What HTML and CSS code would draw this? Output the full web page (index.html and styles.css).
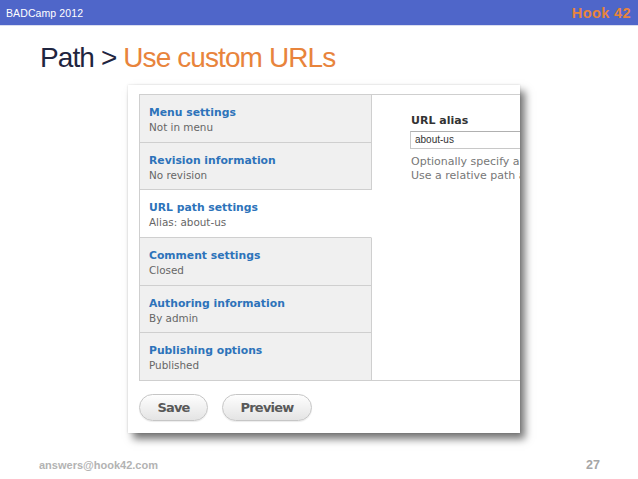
FILE: index.html
```html
<!DOCTYPE html>
<html>
<head>
<meta charset="utf-8">
<link rel="stylesheet" href="styles.css">
</head>
<body>
<div class="slide">
  <header class="topbar">
    <span class="event">BADCamp 2012</span>
    <span class="brand">Hook 42</span>
  </header>
  <h1 class="title"><span class="crumb">Path &gt; </span><span class="accent">Use custom URLs</span></h1>
  <div class="shot">
    <div class="vtabs">
      <ul class="tablist">
        <li class="tab"><strong>Menu settings</strong><span>Not in menu</span></li>
        <li class="tab"><strong>Revision information</strong><span>No revision</span></li>
        <li class="tab active"><strong>URL path settings</strong><span>Alias: about-us</span></li>
        <li class="tab"><strong>Comment settings</strong><span>Closed</span></li>
        <li class="tab"><strong>Authoring information</strong><span>By admin</span></li>
        <li class="tab"><strong>Publishing options</strong><span>Published</span></li>
      </ul>
      <div class="pane">
        <label class="label">URL alias</label>
        <div class="input">about-us</div>
        <p class="help">Optionally specify an alternative URL by which this content can be accessed.<br>Use a relative path and don't add a trailing slash or the URL alias won't work.</p>
      </div>
    </div>
    <div class="actions">
      <button class="btn save">Save</button>
      <button class="btn preview">Preview</button>
    </div>
  </div>
  <footer class="footer">
    <span class="mail">answers@hook42.com</span>
    <span class="page">27</span>
  </footer>
</div>
</body>
</html>
```
FILE: styles.css
```css
* { box-sizing: border-box; }
html, body { margin: 0; padding: 0; background: #fff; }
body { width: 638px; height: 479px; overflow: hidden; font-family: "Liberation Sans", Arial, sans-serif; }

.topbar {
  height: 26px;
  background: #4f66c9;
  border-bottom: 1px solid #d9ddf0;
  display: flex;
  justify-content: space-between;
  align-items: center;
  padding: 0 7px 0 6px;
}
.event { color: #fff; font-size: 10.5px; letter-spacing: 0.1px; }
.brand { color: #e8843c; font-size: 14.5px; font-weight: bold; letter-spacing: 0.4px; }

.title {
  margin: 15px 0 0 40px;
  font-size: 28px;
  line-height: 34px;
  font-weight: normal;
  letter-spacing: -0.9px;
}
.crumb { color: #1f2540; }
.accent { color: #e8843c; }

.shot {
  margin: 10px 0 0 128px;
  width: 392px;
  height: 348px;
  background: #fff;
  padding: 9px 0 0 11px;
  overflow: hidden;
  box-shadow: 5px 6px 8px rgba(0,0,0,0.55), 0 0 2px rgba(0,0,0,0.15);
  font-family: "DejaVu Sans", Verdana, sans-serif;
}

.vtabs {
  display: flex;
  width: 520px;
  height: 287px;
  border-top: 1px solid #cfcfcf;
  border-bottom: 1px solid #cfcfcf;
}
.tablist {
  list-style: none;
  margin: 0;
  padding: 0;
  flex: 0 0 233px;
  width: 233px;
  border-left: 1px solid #cfcfcf;
  display: flex;
  flex-direction: column;
}
.tab {
  flex: 1;
  background: #f0f0f0;
  border-right: 1px solid #cfcfcf;
  border-bottom: 1px solid #cfcfcf;
  padding: 10px 0 0 9px;
  display: flex;
  flex-direction: column;
  white-space: nowrap;
}
.tab:last-child { border-bottom: 0; }
.tab.active { background: #fff; border-right-color: #fff; }
.tab strong {
  color: #2d73ba;
  font-size: 10.8px;
  line-height: 15px;
  font-weight: bold;
}
.tab span {
  color: #666;
  font-size: 10.4px;
  line-height: 15px;
}

.pane {
  flex: 1 1 auto;
  min-width: 0;
  padding: 18px 0 0 39px;
  white-space: nowrap;
  overflow: hidden;
}
.label {
  display: block;
  color: #333;
  font-size: 11px;
  font-weight: bold;
  line-height: 16px;
}
.input {
  margin: 2px 0 0 -1px;
  width: 300px;
  height: 18px;
  border: 1px solid #c8c8c8;
  border-top-color: #b0b0b0;
  font-family: "Liberation Sans", Arial, sans-serif;
  font-size: 10px;
  line-height: 16px;
  color: #333;
  padding-left: 4px;
}
.help {
  margin: 6px 0 0;
  color: #777;
  font-size: 11px;
  line-height: 14px;
}

.actions {
  display: flex;
  gap: 14px;
  margin-top: 13px;
}
.btn {
  height: 27px;
  border: 1px solid #c6c6c6;
  border-radius: 14px;
  background: linear-gradient(#fefefe, #e4e4e4);
  color: #595959;
  font-family: "DejaVu Sans", Verdana, sans-serif;
  font-size: 13px;
  font-weight: bold;
  letter-spacing: -0.8px;
  padding: 0;
  box-shadow: 0 1px 1px rgba(0,0,0,0.08);
}
.save { width: 69px; }
.preview { width: 90px; }

.footer {
  display: flex;
  justify-content: space-between;
  align-items: center;
  margin-top: 25px;
  padding: 0 38px 0 39px;
  height: 14px;
  color: #b3b3b3;
  font-weight: bold;
}
.mail { font-size: 11px; }
.page { font-size: 12.5px; color: #a6a6a6; }
```
